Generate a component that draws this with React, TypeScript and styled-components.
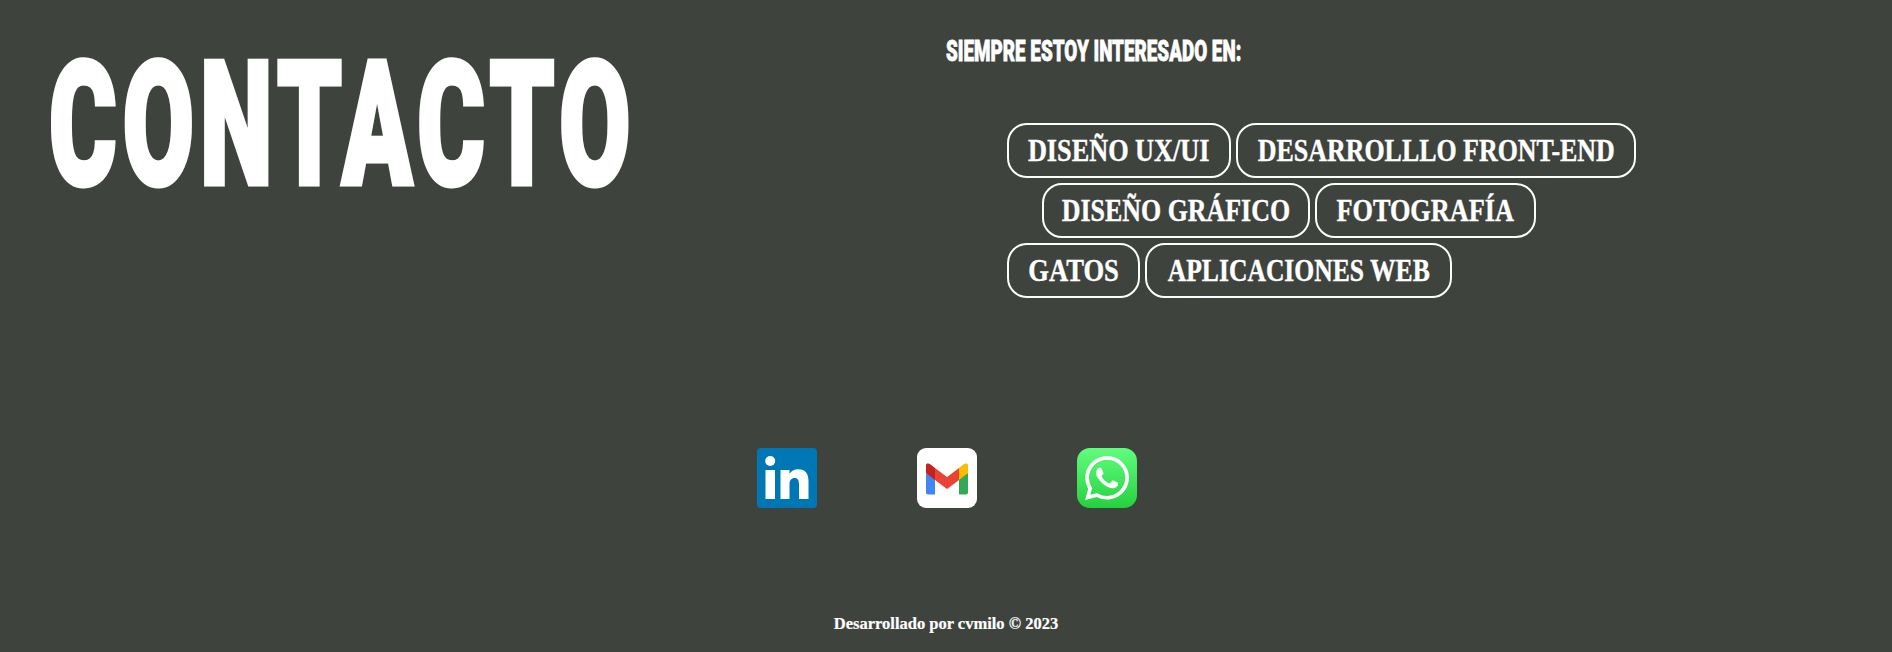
import React from "react";
import styled, { createGlobalStyle } from "styled-components";
import { SiWhatsapp } from "react-icons/si";

const Global = createGlobalStyle`
  html, body { margin: 0; padding: 0; background: #3f433e; }
  #root { min-height: 100vh; }
`;

const Page = styled.main`
  display: flex;
  flex-direction: column;
  height: 652px;
  background: #3f433e;
  color: #ffffff;
  overflow: hidden;
`;

const Top = styled.section`
  display: grid;
  grid-template-columns: 946px 946px;
  height: 448px;
`;

const TitleColumn = styled.div`
  padding: 59px 0 0 49px;
`;

const Title = styled.h1`
  margin: 0;
  height: 132px;
  width: max-content;
  font-family: "Roboto", "Liberation Sans", sans-serif;
  font-weight: 900;
  font-size: 172px;
  line-height: 132px;
  letter-spacing: 10px;
  -webkit-text-stroke: 5px #ffffff;
  transform: scaleX(0.6);
  transform-origin: left center;
`;

const InterestColumn = styled.div`
  display: flex;
  flex-direction: column;
  padding-top: 38px;
`;

const InterestTitle = styled.h2`
  margin: 0;
  height: 26px;
  width: max-content;
  font-family: "Roboto", "Liberation Sans", sans-serif;
  font-weight: 900;
  font-size: 30px;
  line-height: 26px;
  -webkit-text-stroke: 0.8px #ffffff;
  transform: scaleX(0.628);
  transform-origin: left center;
`;

const Tags = styled.div`
  display: flex;
  flex-direction: column;
  gap: 5px;
  margin: 59px 0 0 61px;
`;

const TagRow = styled.div<{ $indent?: number }>`
  display: flex;
  gap: 5px;
  margin-left: ${(p) => p.$indent ?? 0}px;
`;

const Tag = styled.div<{ $width: number }>`
  display: flex;
  align-items: center;
  justify-content: center;
  box-sizing: border-box;
  width: ${(p) => p.$width}px;
  height: 55px;
  border: 2px solid #ffffff;
  border-radius: 20px;
`;

const TagText = styled.span<{ $squeeze: number }>`
  white-space: nowrap;
  font-family: "Liberation Serif", serif;
  font-weight: 700;
  font-size: 32px;
  -webkit-text-stroke: 0.4px #ffffff;
  transform: scaleX(${(p) => p.$squeeze});
`;

const Socials = styled.nav`
  display: flex;
  justify-content: center;
  gap: 100px;
  height: 60px;
  padding-left: 2px;
`;

const SocialIcon = styled.a<{ $bg: string; $radius: number }>`
  display: flex;
  align-items: center;
  justify-content: center;
  width: 60px;
  height: 60px;
  background: ${(p) => p.$bg};
  border-radius: ${(p) => p.$radius}px;
  color: #ffffff;
`;

const Footer = styled.footer`
  margin-top: 104px;
  text-align: center;
  font-family: "Liberation Serif", serif;
  font-weight: 700;
  font-size: 16.5px;
  line-height: 24px;
  -webkit-text-stroke: 0.2px #ffffff;
`;

const LinkedInGlyph = () => (
  <svg width="60" height="60" viewBox="0 0 60 60">
    <circle cx="13.200" cy="13" r="5" fill="#fff" />
    <rect x="8.500" y="22" width="9.500" height="29" fill="#fff" />
    <path
      d="M23.500 22h9v3.900c1.600-2.700 4.600-4.600 8.700-4.600 7.400 0 10.300 4.600 10.300 12V51h-9.500V36.200c0-3.800-1.200-6.200-4.300-6.200-3.500 0-5.200 2.500-5.200 6.400V51h-9z"
      fill="#fff"
    />
  </svg>
);

const GmailGlyph = () => (
  <svg width="60" height="60" viewBox="0 0 60 60">
    <path d="M9 25v19.500c0 1.200.8 2 2 2h7V30z" fill="#4285f4" />
    <path d="M42 30v16.500h7c1.200 0 2-.8 2-2V25z" fill="#34a853" />
    <path d="M18 20v12l12 9 12-9V20l-12 9z" fill="#ea4335" />
    <path d="M9 17.500V25l9 7V20l-3.500-2.700C12 15 9 15 9 17.500z" fill="#c5221f" />
    <path d="M51 17.500V25l-9 7V20l3.500-2.700C48 15 51 15 51 17.500z" fill="#fbbc04" />
  </svg>
);

export default function App() {
  return (
    <Page>
      <Global />
      <Top>
        <TitleColumn>
          <Title>CONTACTO</Title>
        </TitleColumn>
        <InterestColumn>
          <InterestTitle>SIEMPRE ESTOY INTERESADO EN:</InterestTitle>
          <Tags>
            <TagRow>
              <Tag $width={224}><TagText $squeeze={0.82}>DISEÑO UX/UI</TagText></Tag>
              <Tag $width={400}><TagText $squeeze={0.81}>DESARROLLLO FRONT-END</TagText></Tag>
            </TagRow>
            <TagRow $indent={35}>
              <Tag $width={268}><TagText $squeeze={0.81}>DISEÑO GRÁFICO</TagText></Tag>
              <Tag $width={221}><TagText $squeeze={0.82}>FOTOGRAFÍA</TagText></Tag>
            </TagRow>
            <TagRow>
              <Tag $width={133}><TagText $squeeze={0.83}>GATOS</TagText></Tag>
              <Tag $width={307}><TagText $squeeze={0.8}>APLICACIONES WEB</TagText></Tag>
            </TagRow>
          </Tags>
        </InterestColumn>
      </Top>
      <Socials>
        <SocialIcon $bg="#0077b5" $radius={4}><LinkedInGlyph /></SocialIcon>
        <SocialIcon $bg="#ffffff" $radius={9}><GmailGlyph /></SocialIcon>
        <SocialIcon $bg="linear-gradient(180deg, #61fd7d 0%, #25d13f 100%)" $radius={13}>
          <SiWhatsapp size={44} />
        </SocialIcon>
      </Socials>
      <Footer>Desarrollado por cvmilo © 2023</Footer>
    </Page>
  );
}
